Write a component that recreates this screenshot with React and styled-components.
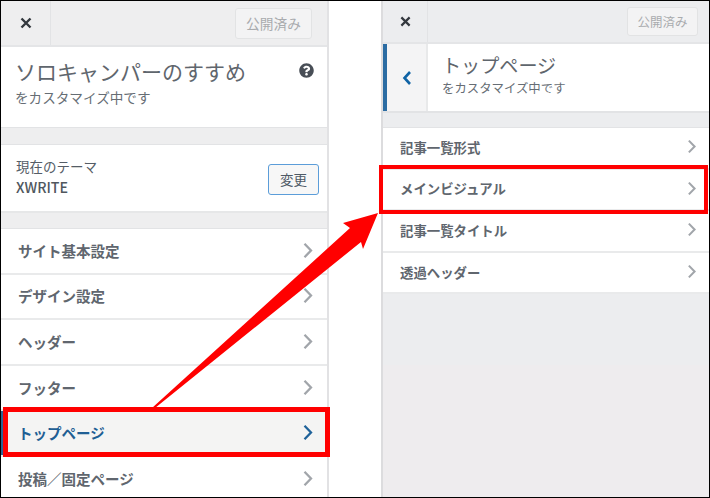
import React from "react";
import styled, { createGlobalStyle } from "styled-components";
import { FaQuestionCircle } from "react-icons/fa";

const GlobalStyle = createGlobalStyle`
    html, body {
        margin: 0;
        padding: 0;
        background: #fff;
    }
    * {
        box-sizing: border-box;
    }
`;

const Frame = styled.div`
    position: relative;
    width: 710px;
    height: 498px;
    border: 1px solid #000;
    background: #fff;
    display: flex;
    justify-content: space-between;
    overflow: hidden;
    font-family: "Noto Sans CJK JP", "Noto Sans", sans-serif;
    color: #555d66;
`;

const Panel = styled.section`
    display: flex;
    flex-direction: column;
    width: 328px;
    background: ${(props) =>
        props.$compact
            ? "linear-gradient(#ecedef 0 364px, #eeecee 364px)"
            : "#eeeeef"};
    border-left: ${(props) => (props.$compact ? "2px solid #dcdcde" : "0")};
    border-right: ${(props) => (props.$compact ? "0" : "2px solid #e2e2e4")};
`;

const Header = styled.header`
    flex: none;
    display: flex;
    align-items: center;
    justify-content: space-between;
    height: ${(props) => (props.$compact ? "43px" : "46px")};
    padding-right: ${(props) => (props.$compact ? "11px" : "15px")};
    border-bottom: 2px solid #e4e5e7;
`;

const CloseButton = styled.div`
    width: ${(props) => (props.$compact ? "45px" : "50px")};
    height: 100%;
    display: flex;
    align-items: center;
    justify-content: center;
    border-right: 1px solid #e2e3e5;
    svg {
        display: block;
    }
`;

const PublishButton = styled.div`
    width: ${(props) => (props.$compact ? "71px" : "77px")};
    height: ${(props) => (props.$compact ? "29px" : "31px")};
    display: flex;
    align-items: center;
    justify-content: center;
    border: 1px solid #e2e3e4;
    border-radius: 3px;
    background: #f3f3f4;
    color: #a9abae;
    font-size: ${(props) => (props.$compact ? "12.5px" : "13.7px")};
`;

const Intro = styled.div`
    flex: none;
    position: relative;
    height: 81px;
    padding: 9px 14px 0;
    background: #fff;
    border-bottom: 1px solid #e2e3e5;
`;

const SubIntro = styled.div`
    flex: none;
    display: flex;
    height: 69px;
    background: #fff;
    border-bottom: 2px solid #e2e3e5;
`;

const BackButton = styled.div`
    flex: none;
    width: 45px;
    display: flex;
    align-items: center;
    justify-content: center;
    border-left: 4px solid #2b6ca3;
    border-right: 2px solid #e8e9ea;
    background: #f4f4f5;
    color: #0f63a5;
`;

const SubIntroText = styled.div`
    padding: 8px 0 0 14px;
`;

const Title = styled.div`
    font-size: ${(props) => (props.$compact ? "19.1px" : "21px")};
    line-height: ${(props) => (props.$compact ? "26px" : "30px")};
    color: #5f666d;
`;

const Caption = styled.div`
    font-size: ${(props) => (props.$compact ? "12.4px" : "13.6px")};
    line-height: ${(props) => (props.$compact ? "20px" : "22px")};
    color: #666d74;
`;

const HelpIcon = styled.span`
    position: absolute;
    top: 16px;
    right: 13px;
    display: flex;
    font-size: 15px;
    color: #484e56;
`;

const Gap = styled.div`
    flex: none;
    height: ${(props) => props.$height}px;
    border-bottom: 1px solid #e2e3e5;
`;

const Theme = styled.div`
    flex: none;
    display: flex;
    align-items: center;
    justify-content: space-between;
    height: 68px;
    padding: 0 8px 0 15px;
    background: #fff;
    border-bottom: 2px solid #e6e7e8;
`;

const ThemeText = styled.div`
    margin-top: -4px;
`;

const ThemeLabel = styled.div`
    font-size: 13.5px;
    line-height: 21px;
`;

const ThemeName = styled.div`
    font-size: 14.2px;
    line-height: 20px;
    font-weight: 500;
    color: #50575e;
`;

const ChangeButton = styled.div`
    width: 51px;
    height: 31px;
    margin-top: 2px;
    display: flex;
    align-items: center;
    justify-content: center;
    border: 1px solid #5b9dd9;
    border-radius: 3px;
    background: #f7f7f7;
    color: #4e5a66;
    font-size: 13.5px;
`;

const RowList = styled.div`
    flex: none;
    display: flex;
    flex-direction: column;
    background: #fff;
`;

const Row = styled.div`
    position: relative;
    flex: none;
    display: flex;
    align-items: center;
    justify-content: space-between;
    height: ${(props) => (props.$compact ? "41.6px" : "45.6px")};
    padding: ${(props) => (props.$compact ? "0 10px 2px 17px" : "0 11px 1px 17px")};
    border-bottom: 2px solid #e9eaeb;
    background: ${(props) => (props.$active ? "#f4f4f3" : "#fff")};
    color: ${(props) => (props.$active ? "#1f5f94" : "#60666e")};
    font-size: ${(props) => (props.$compact ? "13.4px" : "14.5px")};
    font-weight: 700;
    box-shadow: ${(props) => (props.$active ? "inset 2px 0 0 #2c6496" : "none")};
`;

const Highlight = styled.span`
    position: absolute;
    top: ${(props) => props.$top}px;
    bottom: ${(props) => props.$bottom}px;
    left: ${(props) => props.$left}px;
    right: ${(props) => props.$right}px;
    border: ${(props) => props.$width}px solid #f00;
    pointer-events: none;
    z-index: 2;
`;

const ArrowLayer = styled.svg`
    position: absolute;
    left: -1px;
    top: -1px;
    z-index: 3;
    pointer-events: none;
`;

const Chevron = ({ active, size = 17 }) => (
    <svg width={size} height={size} viewBox="0 0 17 17" fill="none">
        <path
            d="M5.5 1.8 L12 8.5 L5.5 15.2"
            stroke={active ? "#1f6299" : "#a1a5aa"}
            strokeWidth="2.3"
        />
    </svg>
);

const Cross = ({ size }) => (
    <svg width={size} height={size} viewBox="0 0 12 12">
        <path d="M1.5 1.5 L10.5 10.5 M10.5 1.5 L1.5 10.5" stroke="#33383e" strokeWidth="2.4" />
    </svg>
);

const leftRows = ["サイト基本設定", "デザイン設定", "ヘッダー", "フッター", "トップページ", "投稿／固定ページ"];
const rightRows = ["記事一覧形式", "メインビジュアル", "記事一覧タイトル", "透過ヘッダー"];

export default function App() {
    return (
        <>
            <GlobalStyle />
            <Frame>
                <Panel>
                    <Header>
                        <CloseButton>
                            <Cross size={12} />
                        </CloseButton>
                        <PublishButton>公開済み</PublishButton>
                    </Header>
                    <Intro>
                        <Title>ソロキャンパーのすすめ</Title>
                        <Caption>をカスタマイズ中です</Caption>
                        <HelpIcon>
                            <FaQuestionCircle />
                        </HelpIcon>
                    </Intro>
                    <Gap $height={17} />
                    <Theme>
                        <ThemeText>
                            <ThemeLabel>現在のテーマ</ThemeLabel>
                            <ThemeName>XWRITE</ThemeName>
                        </ThemeText>
                        <ChangeButton>変更</ChangeButton>
                    </Theme>
                    <Gap $height={16} />
                    <RowList>
                        {leftRows.map((label) => (
                            <Row key={label} $active={label === "トップページ"}>
                                {label}
                                <Chevron active={label === "トップページ"} />
                                {label === "トップページ" && (
                                    <Highlight $top={-4} $bottom={-2} $left={2} $right={-3} $width={5} />
                                )}
                            </Row>
                        ))}
                    </RowList>
                </Panel>
                <Panel $compact>
                    <Header $compact>
                        <CloseButton $compact>
                            <Cross size={11} />
                        </CloseButton>
                        <PublishButton $compact>公開済み</PublishButton>
                    </Header>
                    <SubIntro>
                        <BackButton>
                            <svg width="12" height="16" viewBox="0 0 12 16" fill="none">
                                <path d="M9 2 L3.5 8 L9 14" stroke="currentColor" strokeWidth="2.6" />
                            </svg>
                        </BackButton>
                        <SubIntroText>
                            <Title $compact>トップページ</Title>
                            <Caption $compact>をカスタマイズ中です</Caption>
                        </SubIntroText>
                    </SubIntro>
                    <Gap $height={15} />
                    <RowList>
                        {rightRows.map((label) => (
                            <Row key={label} $compact>
                                {label}
                                <Chevron size={15} />
                                {label === "メインビジュアル" && (
                                    <Highlight $top={-5} $bottom={-5} $left={-4} $right={1} $width={4} />
                                )}
                            </Row>
                        ))}
                    </RowList>
                </Panel>
                <ArrowLayer width="710" height="498" viewBox="0 0 710 498">
                    <polygon
                        points="378,213 343,223 350,228 152,408 155,408 361,242 363,249"
                        fill="#f00"
                    />
                </ArrowLayer>
            </Frame>
        </>
    );
}
